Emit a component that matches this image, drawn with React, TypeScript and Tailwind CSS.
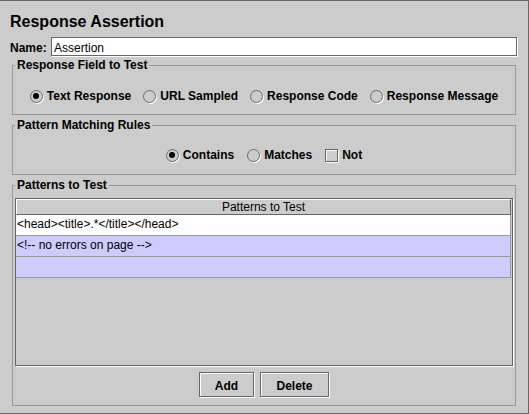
export default function App() {
  const rows = [
    { text: "<head><title>.*</title></head>", bg: "bg-white" },
    { text: "<!-- no errors on page -->", bg: "bg-[#ccccff]" },
    { text: "", bg: "bg-[#ccccff]" },
  ];

  return (
    <div className="box-border h-[414px] w-[529px] border-t border-r border-b border-[#666666] bg-[#cccccc] pl-[10px] pr-[10px] font-['Liberation_Sans',Arial,sans-serif] text-[12px] text-black">
      {/* Title */}
      <div className="mt-[11px] h-[20px] text-[16px] font-bold leading-[20px]">Response Assertion</div>

      {/* Name */}
      <div className="mt-[5px] flex h-[19px] items-start pr-[1px]">
        <span className="pt-[4px] font-bold leading-[14px]">Name:</span>
        <div className="ml-auto h-[19px] w-[466px] border border-[#666666] bg-white pl-[2px] pt-[3px] leading-[14px] shadow-[1px_1px_0_#ffffff]">
          Assertion
        </div>
      </div>

      {/* Response Field to Test */}
      <fieldset className="ml-[2px] mt-[2px] h-[57px] w-[504px] border border-[#999999] px-[2px] pt-[16px]">
        <legend className="px-[2px] font-bold leading-[14px]">Response Field to Test</legend>
        <div className="flex h-[16px] items-center justify-center gap-[12px] font-bold leading-[14px]">
          <Radio checked label="Text Response" />
          <Radio label="URL Sampled" />
          <Radio label="Response Code" />
          <Radio label="Response Message" />
        </div>
      </fieldset>

      {/* Pattern Matching Rules */}
      <fieldset className="ml-[2px] mt-[3px] h-[57px] w-[504px] border border-[#999999] px-[2px] pt-[15px]">
        <legend className="px-[2px] font-bold leading-[14px]">Pattern Matching Rules</legend>
        <div className="flex h-[16px] items-center justify-center gap-[13px] font-bold leading-[14px]">
          <Radio checked label="Contains" />
          <Radio label="Matches" />
          <div className="flex items-center gap-[4px]">
            <span className="h-[13px] w-[13px] border border-[#666666] shadow-[inset_1px_1px_0_#ffffff,1px_1px_0_#ffffff]" />
            <span>Not</span>
          </div>
        </div>
      </fieldset>

      {/* Patterns to Test */}
      <fieldset className="ml-[2px] mt-[3px] h-[228px] w-[504px] border border-[#999999] px-[2px] pt-[6px]">
        <legend className="px-[2px] font-bold leading-[14px]">Patterns to Test</legend>
        <div className="h-[168px] w-[498px] border border-[#666666] shadow-[1px_1px_0_#ffffff]">
          <div className="h-[16px] w-[495px] border-t border-l border-b border-r border-t-white border-l-white border-b-[#666666] border-r-[#666666] text-center leading-[14px]">
            Patterns to Test
          </div>
          {rows.map((r, i) => (
            <div
              key={i}
              className={`h-[21px] w-[495px] border-r border-b border-[#999999] pl-[1px] leading-[18px] ${r.bg}`}
            >
              {r.text}
            </div>
          ))}
        </div>
        <div className="mt-[6px] flex justify-center gap-[6px]">
          <button className="h-[25px] w-[55px] border border-[#666666] pt-[2px] font-bold leading-[22px] shadow-[inset_1px_1px_0_#ffffff,1px_1px_0_#ffffff]">
            Add
          </button>
          <button className="h-[25px] w-[69px] border border-[#666666] pt-[2px] font-bold leading-[22px] shadow-[inset_1px_1px_0_#ffffff,1px_1px_0_#ffffff]">
            Delete
          </button>
        </div>
      </fieldset>
    </div>
  );
}

function Radio({ label, checked = false }: { label: string; checked?: boolean }) {
  return (
    <div className="flex items-center gap-[4px]">
      <span className="flex h-[13px] w-[13px] items-center justify-center rounded-full border border-[#6a6a6a] shadow-[1px_1px_0_#ffffff]">
        {checked && <span className="h-[6px] w-[6px] rounded-full bg-black" />}
      </span>
      <span>{label}</span>
    </div>
  );
}
